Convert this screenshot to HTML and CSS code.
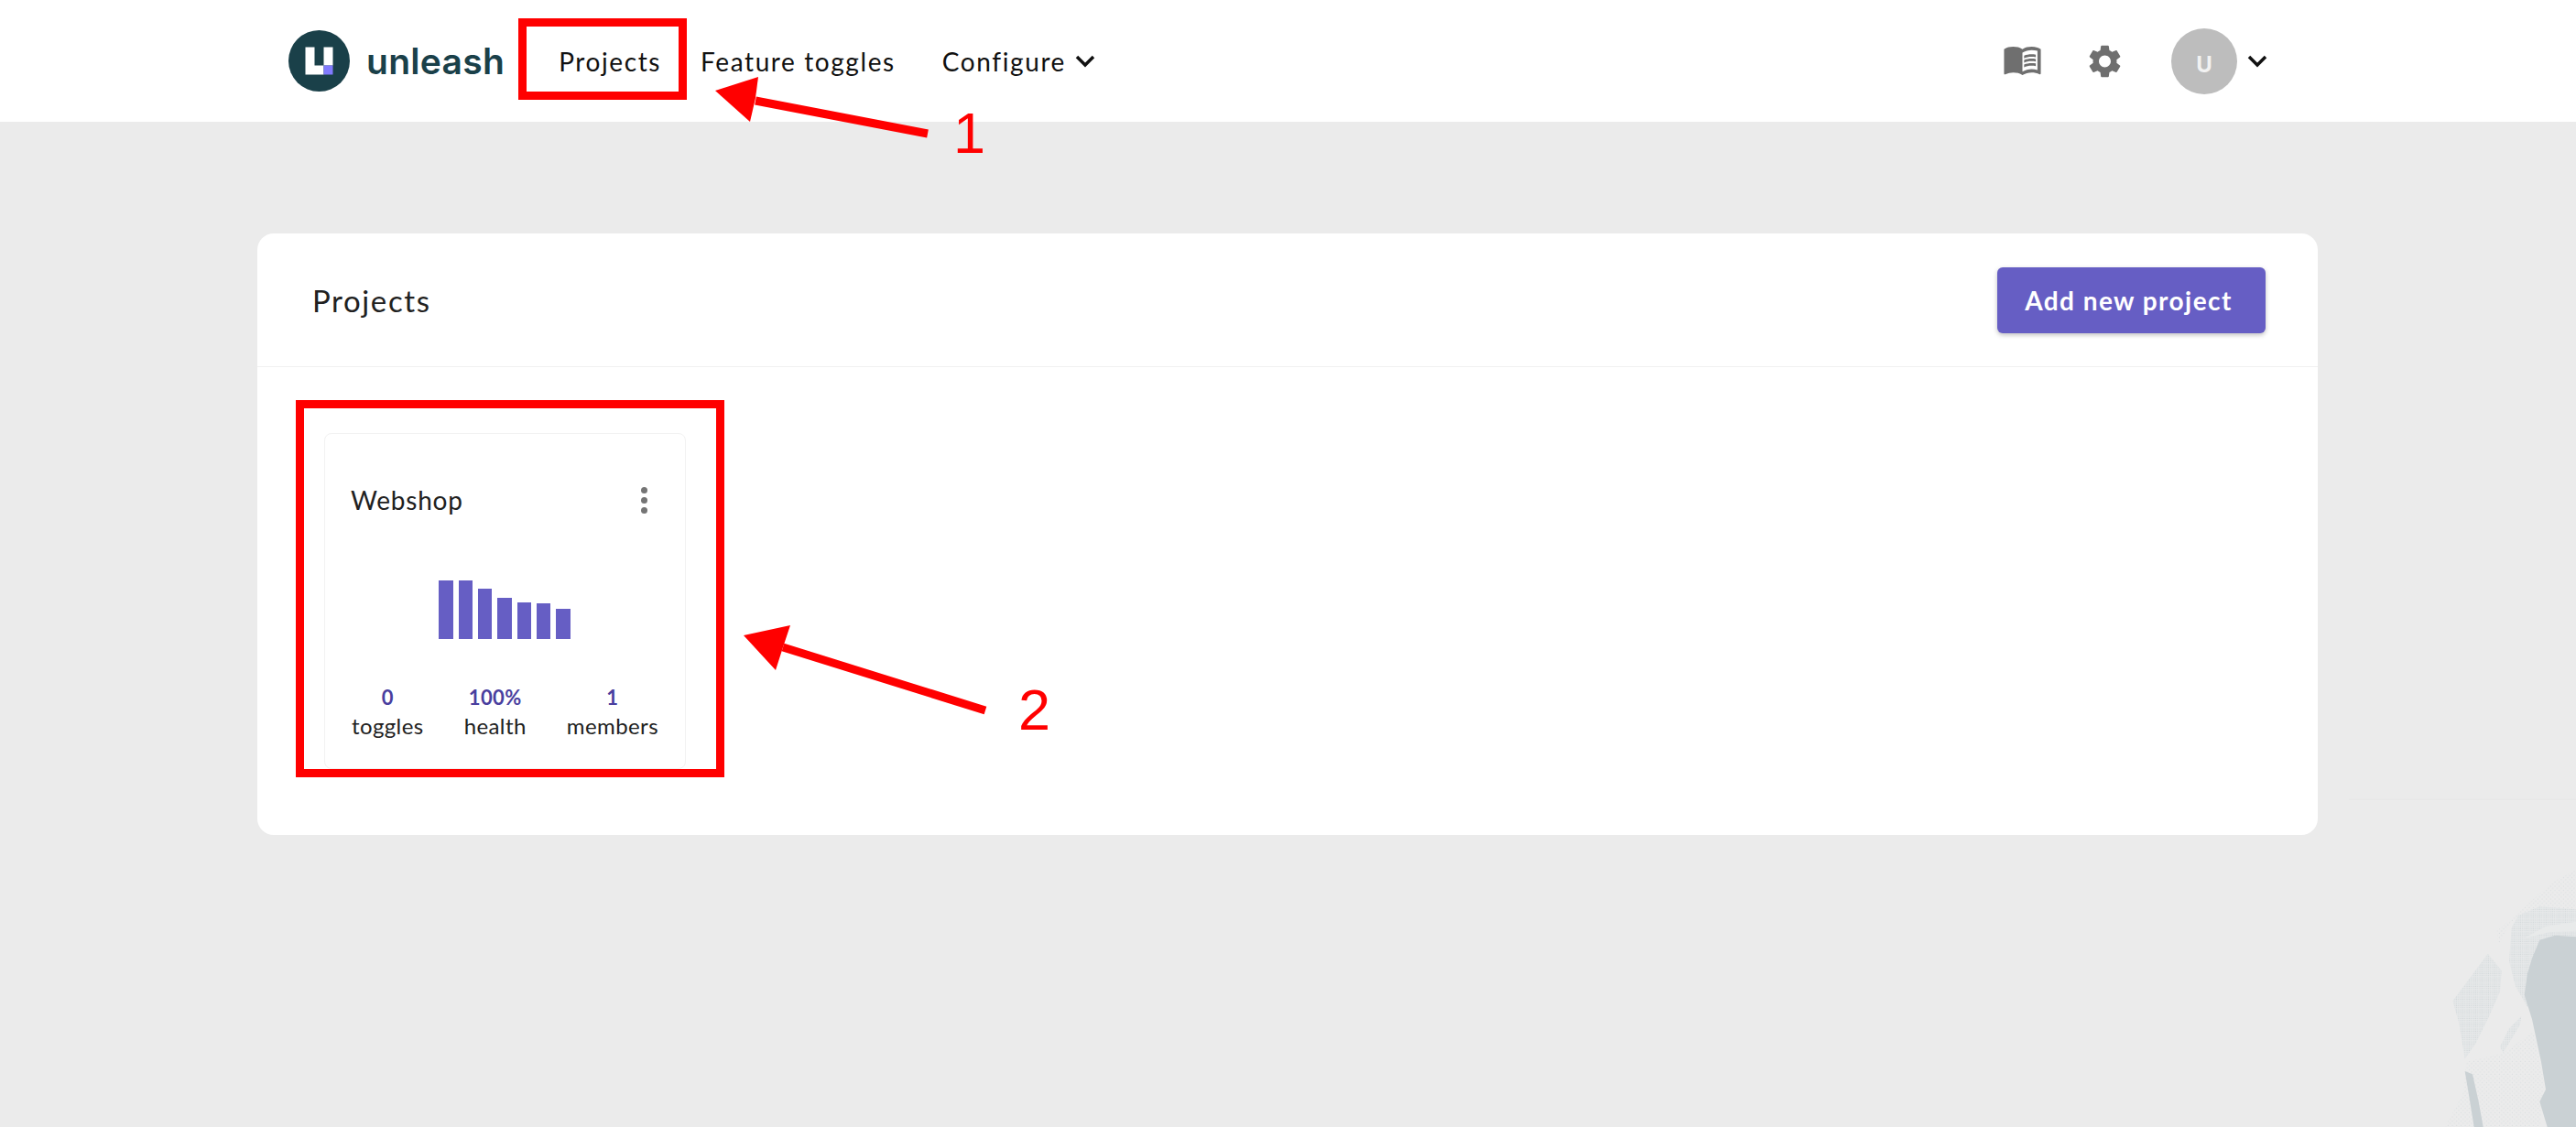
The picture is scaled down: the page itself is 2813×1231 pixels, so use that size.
FILE: index.html
```html
<!DOCTYPE html>
<html>
<head>
  <meta charset="UTF-8">
  <title>Unleash - Projects</title>
  <link rel="stylesheet" href="styles.css">
</head>
<body>
  <svg class="watermark" viewBox="0 0 759 1143" aria-hidden="true">
    <defs>
      <pattern id="dots-dense" width="7" height="7" patternUnits="userSpaceOnUse">
        <rect width="7" height="7" fill="#e6e8e9"/>
        <circle cx="3" cy="3" r="1.800" fill="#d2d7d9"/>
      </pattern>
      <pattern id="dots-sparse" width="14" height="14" patternUnits="userSpaceOnUse">
        <circle cx="4" cy="4" r="1.800" fill="#d9dddf"/>
        <circle cx="11" cy="11" r="1.800" fill="#d9dddf"/>
      </pattern>
    </defs>
    <line x1="15" y1="70" x2="759" y2="70" stroke="#e6e6e6" stroke-width="2"/>
    <path fill="url(#dots-sparse)" d="M759 300L690 335L620 395L560 450L500 500L505 545L545 470L759 440Z"/>
    <path fill="url(#dots-dense)" d="M759 430L640 420L570 450L548 490L540 600L560 680L600 750L759 750Z"/>
    <path fill="#e8eaea" d="M759 500L670 505L590 525L580 530L660 485L759 470Z"/>
    <path fill="url(#dots-dense)" d="M470 575L515 630L510 700L470 790L430 870L395 920L375 800L355 730L400 670Z"/>
    <path fill="url(#dots-dense)" d="M580 780L575 810L520 900L510 880L540 820Z"/>
    <path fill="url(#dots-sparse)" d="M400 930L520 900L620 830L655 1000L640 1143L330 1143L390 1030Z"/>
    <path fill="#cad1d4" d="M759 520L690 515L640 530L615 590L600 640L590 710L615 790L645 930L660 1020L640 1060L665 1143L759 1143Z"/>
    <path fill="#cad1d4" d="M395 960L420 970L440 1060L455 1143L425 1143L410 1050Z"/>
  </svg>

  <header class="topbar">
    <div class="logo">
      <svg class="logo-mark" viewBox="0 0 67 67">
        <circle cx="33.5" cy="33.5" r="33.5" fill="#1a4049"/>
        <path fill="#fff" d="M18.500 18.500h10v20h10v10h-20z"/>
        <rect x="38.500" y="18.500" width="10" height="20" fill="#fff"/>
        <rect x="38.500" y="38.500" width="10" height="10" fill="#817afe"/>
      </svg>
      <span class="logo-text">unleash</span>
    </div>
    <nav class="nav">
      <a class="nav-link">Projects</a>
      <a class="nav-link">Feature toggles</a>
      <a class="nav-link nav-configure">Configure
        <svg class="chevron" viewBox="0 0 22 14"><path d="M2 2l9 9 9-9"/></svg>
      </a>
    </nav>
    <div class="topbar-right">
      <svg class="icon-book" viewBox="1 4.500 22 17">
        <path d="M21 5c-1.110-.35-2.330-.5-3.500-.5-1.950 0-4.050.4-5.500 1.500-1.450-1.100-3.550-1.500-5.500-1.500S2.450 4.900 1 6v14.650c0 .25.25.5.5.5.1 0 .15-.05.25-.05C3.100 20.450 5.050 20 6.500 20c1.950 0 4.050.4 5.500 1.500 1.350-.85 3.800-1.500 5.500-1.500 1.650 0 3.350.3 4.750 1.050.1.050.15.050.25.050.25 0 .5-.25.5-.5V6c-.6-.45-1.250-.75-2-1zm0 13.500c-1.100-.35-2.300-.5-3.500-.5-1.700 0-4.150.65-5.500 1.500V8c1.350-.85 3.800-1.500 5.500-1.500 1.200 0 2.400.15 3.500.5v11.500z"/>
        <path d="M17.500 10.500c.88 0 1.730.09 2.500.26V9.240c-.79-.15-1.640-.24-2.500-.24-1.700 0-3.240.29-4.500.83v1.660c1.130-.64 2.700-.99 4.500-.99zM13 12.490v1.660c1.130-.64 2.700-.99 4.500-.99.88 0 1.730.09 2.500.26V11.900c-.79-.15-1.640-.24-2.500-.24-1.700 0-3.240.3-4.500.83zM17.500 14.330c-1.700 0-3.240.29-4.500.83v1.660c1.130-.64 2.700-.99 4.500-.99.88 0 1.730.09 2.500.26v-1.520c-.79-.16-1.640-.24-2.500-.24z"/>
      </svg>
      <svg class="icon-gear" viewBox="2.500 2 19 20">
        <path d="M19.140 12.940c.04-.3.06-.61.06-.94 0-.32-.02-.64-.07-.94l2.030-1.580c.18-.14.23-.41.12-.61l-1.920-3.320c-.12-.22-.37-.29-.59-.22l-2.390.96c-.5-.38-1.030-.7-1.620-.94l-.36-2.540c-.04-.24-.24-.41-.48-.41h-3.840c-.24 0-.43.17-.47.41l-.36 2.540c-.59.24-1.130.57-1.620.94l-2.390-.96c-.22-.08-.47 0-.59.22L2.740 8.870c-.12.21-.08.47.12.61l2.030 1.580c-.05.3-.09.63-.09.94s.02.64.07.94l-2.030 1.580c-.18.14-.23.41-.12.61l1.920 3.320c.12.22.37.29.59.22l2.390-.96c.5.38 1.030.7 1.620.94l.36 2.540c.05.24.24.41.48.41h3.840c.24 0 .44-.17.47-.41l.36-2.540c.59-.24 1.130-.56 1.620-.94l2.390.96c.22.08.47 0 .59-.22l1.920-3.320c.12-.22.07-.47-.12-.61l-2.010-1.580zM12 15.600c-1.980 0-3.600-1.620-3.600-3.600s1.620-3.600 3.600-3.600 3.600 1.620 3.600 3.600-1.620 3.600-3.600 3.600z"/>
      </svg>
      <div class="avatar">U</div>
      <svg class="chevron chevron-user" viewBox="0 0 22 14"><path d="M2 2l9 9 9-9"/></svg>
    </div>
  </header>

  <main class="panel">
    <div class="panel-head">
      <h1 class="panel-title">Projects</h1>
      <button class="add-button">Add new project</button>
    </div>
    <div class="panel-body">
      <div class="project-card">
        <div class="card-head">
          <span class="card-title">Webshop</span>
          <span class="more-dots"><i></i><i></i><i></i></span>
        </div>
        <div class="chart">
          <div class="bar" style="height: 64px"></div>
          <div class="bar" style="height: 64px"></div>
          <div class="bar" style="height: 55px"></div>
          <div class="bar" style="height: 45px"></div>
          <div class="bar" style="height: 40px"></div>
          <div class="bar" style="height: 39px"></div>
          <div class="bar" style="height: 33px"></div>
        </div>
        <div class="stats">
          <div class="stat"><strong>0</strong><span>toggles</span></div>
          <div class="stat"><strong>100%</strong><span>health</span></div>
          <div class="stat"><strong>1</strong><span>members</span></div>
        </div>
      </div>
    </div>
  </main>

  <!-- red markup drawn on top of the screenshot -->
  <div class="mark-box mark-nav"></div>
  <div class="mark-box mark-card"></div>
  <svg class="mark-arrows" viewBox="0 0 2813 1231" aria-hidden="true">
    <line x1="825" y1="110" x2="1013" y2="146"/>
    <polygon points="781,99 828,84 825,107 819,133"/>
    <line x1="855" y1="707" x2="1076" y2="776"/>
    <polygon points="812,694 863,683 855,707 847,732"/>
  </svg>
  <div class="mark-number mark-one">1</div>
  <div class="mark-number mark-two">2</div>
</body>
</html>
```

FILE: styles.css
```css
body {
  margin: 0;
  height: 1231px;
  position: relative;
  overflow: hidden;
  background-color: #ebebeb;
  font-family: Lato, "Open Sans", sans-serif;
  color: #212121;
}
.watermark {
  position: absolute;
  right: 0;
  bottom: 0;
  width: 253px;
  height: 381px;
}
.topbar {
  position: relative;
  display: flex;
  align-items: center;
  height: 133px;
  padding: 0 337px 0 315px;
  background-color: #fff;
}
.logo {
  display: flex;
  align-items: center;
  gap: 18px;
}
.logo-mark {
  width: 67px;
  height: 67px;
}
.logo-text {
  font-family: Inter, sans-serif;
  font-size: 39px;
  font-weight: 600;
  letter-spacing: 0.3px;
  color: #1a4049;
}
.nav {
  display: flex;
  align-items: center;
  gap: 43px;
  margin-left: 59px;
}
.nav-link {
  display: flex;
  align-items: center;
  gap: 10px;
  font-size: 28px;
  letter-spacing: 1.6px;
  color: #111;
}
.nav-configure {
  margin-left: 8px;
}
.chevron {
  width: 22px;
  height: 14px;
  fill: none;
  stroke: #111;
  stroke-width: 3.500;
}
.topbar-right {
  display: flex;
  align-items: center;
  margin-left: auto;
}
.icon-book {
  width: 41px;
  height: 31px;
  fill: #6f6f6f;
}
.icon-gear {
  width: 35px;
  height: 36px;
  margin-left: 52px;
  fill: #6f6f6f;
}
.avatar {
  display: flex;
  align-items: center;
  justify-content: center;
  box-sizing: border-box;
  width: 72px;
  height: 72px;
  margin-left: 55px;
  padding-top: 8px;
  border-radius: 50%;
  background-color: #bdbdbd;
  color: #f2f2f2;
  font-family: Inter, sans-serif;
  font-size: 24px;
  font-weight: 700;
}
.chevron-user {
  margin-left: 11px;
}
.panel {
  position: relative;
  box-sizing: border-box;
  width: 2250px;
  height: 657px;
  margin: 122px 0 0 281px;
  border-radius: 18px;
  background-color: #fff;
}
.panel-head {
  display: flex;
  align-items: center;
  justify-content: space-between;
  box-sizing: border-box;
  height: 146px;
  padding: 0 57px 0 60px;
  border-bottom: 1px solid #f0f0f0;
}
.panel-title {
  margin: 0;
  font-size: 33px;
  font-weight: 400;
  letter-spacing: 1.6px;
}
.add-button {
  width: 293px;
  height: 72px;
  padding: 0 6px 0 0;
  border: none;
  border-radius: 6px;
  background-color: #665ec4;
  box-shadow: 0 2px 5px rgba(0, 0, 0, 0.25);
  color: #fff;
  font-family: inherit;
  font-size: 28px;
  font-weight: 700;
  letter-spacing: 1.45px;
}
.panel-body {
  padding: 72px 0 0 73px;
}
.project-card {
  box-sizing: border-box;
  width: 395px;
  height: 367px;
  padding: 55px 29px 0 28px;
  border: 1px solid #f2f2f2;
  border-radius: 8px;
}
.card-head {
  display: flex;
  align-items: center;
  justify-content: space-between;
  height: 34px;
}
.card-title {
  font-size: 28px;
  letter-spacing: 0.8px;
}
.more-dots {
  display: flex;
  flex-direction: column;
  gap: 4px;
  margin-right: 12px;
}
.more-dots i {
  width: 7px;
  height: 7px;
  border-radius: 50%;
  background-color: #757575;
}
.chart {
  display: flex;
  align-items: flex-end;
  justify-content: center;
  gap: 6px;
  height: 64px;
  margin-top: 71px;
}
.bar {
  width: 15.400px;
  background-color: #665ec4;
}
.stats {
  display: flex;
  justify-content: space-between;
  margin-top: 50px;
  padding-left: 1px;
}
.stat {
  display: flex;
  flex-direction: column;
  align-items: center;
  font-size: 24px;
  line-height: 34px;
  letter-spacing: 0.4px;
}
.stat strong {
  font-size: 22px;
  line-height: 28px;
  color: #4a3f9f;
}
.mark-box {
  position: absolute;
  box-sizing: border-box;
  border: 9px solid #f00;
}
.mark-nav {
  left: 566px;
  top: 20px;
  width: 184px;
  height: 89px;
}
.mark-card {
  left: 323px;
  top: 437px;
  width: 468px;
  height: 412px;
}
.mark-arrows {
  position: absolute;
  left: 0;
  top: 0;
  width: 2813px;
  height: 1231px;
  fill: #f00;
  stroke: #f00;
  stroke-width: 0;
}
.mark-arrows line {
  stroke-width: 9;
}
.mark-number {
  position: absolute;
  font-family: "Liberation Sans", sans-serif;
  font-size: 63px;
  line-height: 63px;
  color: #f00;
}
.mark-one {
  left: 1041px;
  top: 114px;
}
.mark-two {
  left: 1112px;
  top: 744px;
}
```
